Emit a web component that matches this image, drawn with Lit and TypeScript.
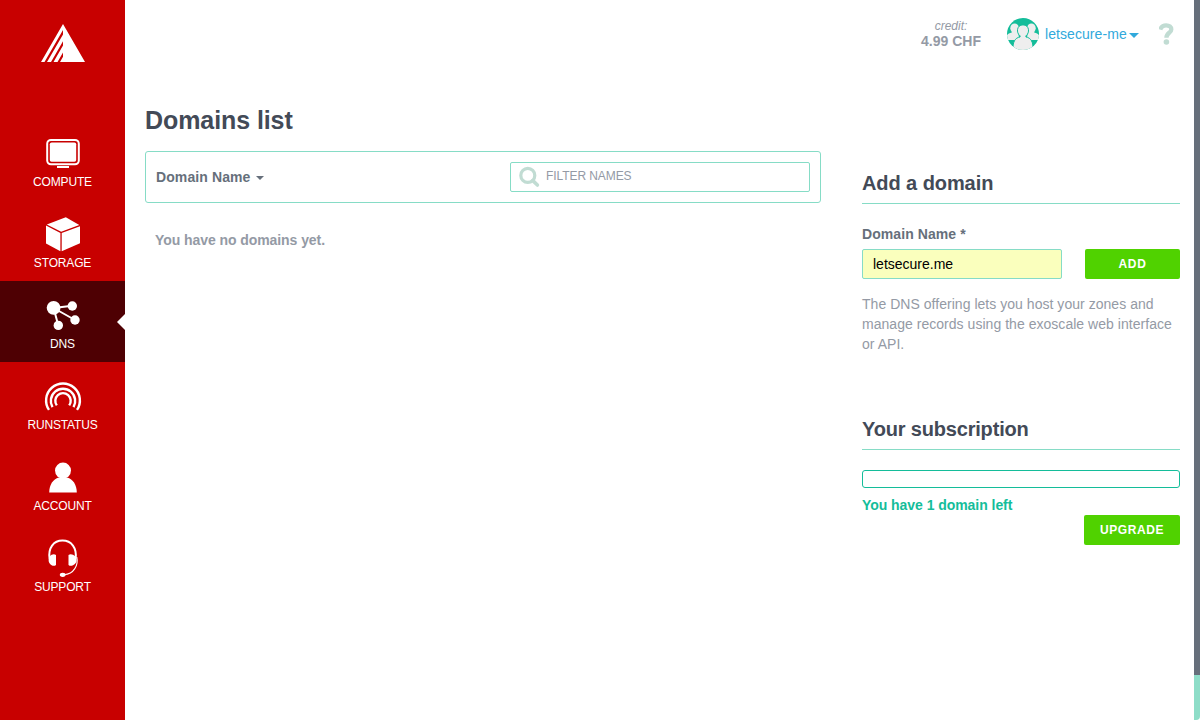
import { LitElement, html, svg, css, type SVGTemplateResult } from "lit";
import { customElement, state } from "lit/decorators.js";
import { classMap } from "lit/directives/class-map.js";

interface NavItem {
  id: string;
  label: string;
  icon: SVGTemplateResult;
}

const NAV: NavItem[] = [
  {
    id: "compute",
    label: "COMPUTE",
    icon: svg`
      <rect x="47.2" y="20.9" width="31.6" height="24.4" rx="3.8" fill="none" stroke="#fff" stroke-width="2"/>
      <rect x="49.8" y="23.4" width="26.4" height="19.3" rx="1.8"/>
      <rect x="57" y="47" width="12" height="2"/>`,
  },
  {
    id: "storage",
    label: "STORAGE",
    icon: svg`
      <path d="M46.8 24.4 L65.8 17.3 L79.3 25.1 L61.2 31.7z"/>
      <path d="M46 25.4 L60.4 33 V51.3 L46 43.4z"/>
      <path d="M61.7 33 L80 26.3 V43.2 L61.7 51.3z"/>`,
  },
  {
    id: "dns",
    label: "DNS",
    icon: svg`
      <path d="M53.6 27 L72.3 24.8 M53.6 27 L75 39 M53.6 27 L58.3 44.4" stroke="#fff" stroke-width="2"/>
      <circle cx="53.6" cy="26.8" r="6.9"/>
      <circle cx="72.3" cy="25" r="4.7"/>
      <circle cx="75" cy="39" r="4.7"/>
      <circle cx="58.3" cy="44.4" r="4.7"/>`,
  },
  {
    id: "runstatus",
    label: "RUNSTATUS",
    icon: svg`
      <g fill="none" stroke="#fff" stroke-width="2.4">
        <path d="M49 47.9 A16.9 16.9 0 1 1 77 47.9"/>
        <path d="M52.5 45.2 A12.2 12.2 0 1 1 73.5 45.2"/>
        <path d="M56.8 43.4 A7.7 7.7 0 1 1 69.2 43.4"/>
      </g>`,
  },
  {
    id: "account",
    label: "ACCOUNT",
    icon: svg`
      <circle cx="63" cy="27.6" r="8"/>
      <path d="M49.2 49.4 C49.4 41.5 53 36.2 58.8 34.5 H67.2 C73 36.2 76.6 41.5 76.8 49.4z"/>`,
  },
  {
    id: "support",
    label: "SUPPORT",
    icon: svg`
      <path d="M49.6 34.5 C48 24 53.5 16.6 62.5 16.6 C71.5 16.6 77 24 75.6 34.5" fill="none" stroke="#fff" stroke-width="2"/>
      <path d="M56 31 V41 Q54 42.6 51.6 41.2 Q48.6 39.5 48.6 36 Q48.6 32.5 51.6 30.8 Q54 29.4 56 31z"/>
      <path d="M68.5 31 V41 Q70.5 42.6 73 41.2 Q76.6 39.5 76.6 36 Q76.6 32.5 73 30.8 Q70.5 29.4 68.5 31z"/>
      <path d="M76.8 33 C78.6 41 74 50 64 50.8" fill="none" stroke="#fff" stroke-width="1.1"/>
      <ellipse cx="62.7" cy="50.8" rx="2.9" ry="2.1"/>`,
  },
];

@customElement("side-nav")
export class SideNav extends LitElement {
  @state() private active = "dns";

  static styles = css`
    :host { display: block; width: 125px; background: #c80000; color: #fff; }
    .logo { display: block; height: 119px; }
    .logo svg { display: block; }
    .item {
      position: relative;
      display: block;
      height: 81px;
      cursor: pointer;
      text-align: center;
      font-size: 12px;
      line-height: 16px;
    }
    .item svg { display: block; fill: #fff; }
    .item.active { background: #4e0003; }
    .label { display: block; margin-top: 1px; letter-spacing: -0.16px; }
    .pointer {
      position: absolute;
      right: 0;
      top: 33px;
      border: 8px solid transparent;
      border-right-color: #fff;
      border-left: 0;
    }
  `;

  render() {
    return html`
      <a class="logo">
        <svg width="125" height="80" fill="#fff">
          <path d="M63 24 L85 62 H60 L63 56.8 V52.5 L57.5 62 H53.5 L63 45.6 V41.3 L51 62 H47 L63 34.4 V30 L44.5 62 H41z"/>
        </svg>
      </a>
      <nav>
        ${NAV.map(
          (item) => html`
            <a
              class=${classMap({ item: true, active: item.id === this.active })}
              @click=${() => (this.active = item.id)}
            >
              <svg width="125" height="54">${item.icon}</svg>
              <span class="label">${item.label}</span>
              ${item.id === this.active ? html`<i class="pointer"></i>` : null}
            </a>
          `
        )}
      </nav>
    `;
  }
}

@customElement("top-bar")
export class TopBar extends LitElement {
  static styles = css`
    :host { display: flex; justify-content: flex-end; height: 68px; padding-right: 20px; }
    .credit { margin: 19px 26px 0 0; text-align: center; color: #949aa5; line-height: 15px; }
    .credit em { display: block; font-size: 12px; }
    .credit b { display: block; font-size: 14px; }
    .avatar { display: block; margin: 18px 6px 0 0; }
    .user { display: flex; width: 94px; margin-top: 24px; font-size: 14px; line-height: 20px; letter-spacing: 0.07px; color: #31a9dc; }
    .caret { margin: 9px 0 0 auto; width: 0; height: 0; border: 5px solid transparent; border-top-color: #31a9dc; border-bottom: 0; }
    .help { display: block; margin: 22px 0 0 20px; }
  `;

  render() {
    return html`
      <div class="credit"><em>credit:</em><b>4.99 CHF</b></div>
      <svg class="avatar" width="32" height="32" viewBox="0 0 32 32">
        <defs><clipPath id="disc"><circle cx="16" cy="16" r="16"/></clipPath></defs>
        <g clip-path="url(#disc)">
          <rect width="32" height="32" fill="#14bd9a"/>
          <g fill="#eee">
            <ellipse cx="7.6" cy="10.2" rx="4.3" ry="4.8"/>
            <path d="M-1 22 C-1 17 1 15.3 4.8 14.6 V12 H10.5 L12.5 22z"/>
            <ellipse cx="24.4" cy="10.2" rx="4.3" ry="4.8"/>
            <path d="M33 22 C33 17 31 15.3 27.2 14.6 V12 H21.5 L19.5 22z"/>
          </g>
          <path d="M5.9 33 C5.6 23.5 8 20 13.1 18.9 L13.1 17.9 C8.9 14.8 9.6 6.9 16 6.9 C22.4 6.9 23.1 14.8 18.9 17.9 L18.9 18.9 C24 20 26.4 23.5 26.1 33z" fill="#eee" stroke="#14bd9a" stroke-width="1"/>
        </g>
      </svg>
      <div class="user"><span>letsecure-me</span><i class="caret"></i></div>
      <svg class="help" width="15" height="24" viewBox="0 0 15 24">
        <path d="M1.3 7.6 C2.2 4.4 4.3 3.4 7.2 3.4 C10.4 3.4 12.3 5 12.3 7.4 C12.3 10.9 7.4 10.8 7.4 15.8" fill="none" stroke="#c1dcd3" stroke-width="4.3"/>
        <circle cx="7.4" cy="20" r="2.8" fill="#c1dcd3"/>
      </svg>
    `;
  }
}

@customElement("domain-list")
export class DomainList extends LitElement {
  static styles = css`
    :host { display: block; width: 676px; }
    h1 { margin: 0 0 16px; font-size: 25px; line-height: 30px; letter-spacing: -0.08px; color: #434a57; }
    .bar {
      box-sizing: border-box;
      display: flex;
      align-items: center;
      justify-content: space-between;
      height: 52px;
      padding: 0 10px;
      border: 1px solid #86dcc6;
      border-radius: 3px;
    }
    .sort { display: flex; align-items: center; font-size: 14px; font-weight: bold; letter-spacing: 0.1px; color: #666f7b; }
    .caret { margin: 2px 0 0 6px; border: 4px solid transparent; border-top-color: #666f7b; border-bottom: 0; }
    .filter {
      box-sizing: border-box;
      display: flex;
      align-items: center;
      width: 300px;
      height: 30px;
      padding-left: 7px;
      border: 1px solid #86dcc6;
      border-radius: 2px;
    }
    .filter svg { flex: none; }
    .filter input {
      flex: 1;
      min-width: 0;
      margin: 0 0 2px 5px;
      padding: 0;
      border: 0;
      outline: 0;
      background: none;
      font: 12px "Liberation Sans", Arial, sans-serif;
      letter-spacing: -0.08px;
      color: #949aa5;
    }
    .filter input::placeholder { color: #949aa5; opacity: 1; }
    .empty { margin: 27px 0 0 10px; font-size: 14px; line-height: 20px; font-weight: bold; letter-spacing: -0.07px; color: #949aa5; }
  `;

  render() {
    return html`
      <h1>Domains list</h1>
      <div class="bar">
        <div class="sort">Domain Name<i class="caret"></i></div>
        <label class="filter">
          <svg width="23" height="22" viewBox="0 0 23 22" fill="none" stroke="#c1dcd3">
            <circle cx="9.8" cy="9.4" r="7" stroke-width="3.2"/>
            <path d="M14.8 14.6 L19.4 19" stroke-width="3.6" stroke-linecap="round"/>
          </svg>
          <input placeholder="FILTER NAMES" />
        </label>
      </div>
      <p class="empty">You have no domains yet.</p>
    `;
  }
}

@customElement("domain-panel")
export class DomainPanel extends LitElement {
  static styles = css`
    :host { display: block; width: 318px; padding-top: 66px; font-size: 14px; line-height: 20px; }
    h2 {
      margin: 0 0 20px;
      padding-bottom: 8px;
      border-bottom: 1px solid #86dcc6;
      font-size: 20px;
      line-height: 24px;
      letter-spacing: -0.08px;
      color: #434a57;
    }
    .plan { letter-spacing: -0.18px; }
    label { display: block; margin-bottom: 5px; font-weight: bold; letter-spacing: 0.08px; color: #666f7b; }
    .form { display: flex; justify-content: space-between; }
    .form input {
      box-sizing: border-box;
      width: 200px;
      height: 30px;
      padding: 0 10px;
      border: 1px solid #86dcc6;
      border-radius: 2px;
      outline: 0;
      background: #faffbd;
      font: 14px "Liberation Sans", Arial, sans-serif;
      color: #000;
    }
    button {
      height: 30px;
      padding: 0;
      border: 0;
      border-radius: 2px;
      background: #50d200;
      color: #fff;
      font: bold 12px "Liberation Sans", Arial, sans-serif;
      letter-spacing: 0.6px;
    }
    .add { width: 95px; }
    .upgrade { display: block; width: 96px; margin-left: auto; }
    .hint { margin: 15px 0 63px; letter-spacing: 0.035px; color: #949aa5; }
    .quota { box-sizing: border-box; height: 18px; border: 1px solid #14bd9a; border-radius: 3px; }
    .left { margin: 7px 0 0; font-weight: bold; letter-spacing: -0.05px; color: #14bd9a; }
  `;

  render() {
    return html`
      <h2>Add a domain</h2>
      <label for="name">Domain Name *</label>
      <div class="form">
        <input id="name" .value=${"letsecure.me"} />
        <button class="add">ADD</button>
      </div>
      <p class="hint">
        The DNS offering lets you host your zones and manage records using the exoscale web interface or API.
      </p>
      <h2 class="plan">Your subscription</h2>
      <div class="quota"></div>
      <p class="left">You have 1 domain left</p>
      <button class="upgrade">UPGRADE</button>
    `;
  }
}

@customElement("app-root")
export class AppRoot extends LitElement {
  static styles = css`
    :host {
      display: grid;
      grid-template-columns: 125px 1fr 6px;
      height: 720px;
      overflow: hidden;
      background: #fff;
      font-family: "Liberation Sans", Arial, sans-serif;
    }
    main { min-width: 0; }
    top-bar { margin-bottom: 37px; }
    .content { display: flex; gap: 41px; padding-left: 20px; }
    .edge { display: flex; flex-direction: column; background: #666f7b; }
    .edge-end { height: 45px; margin-top: auto; background: #fff; }
    .edge-fill { height: 100%; border-bottom-right-radius: 4px; background: #8eddc8; }
  `;

  render() {
    return html`
      <side-nav></side-nav>
      <main>
        <top-bar></top-bar>
        <div class="content">
          <domain-list></domain-list>
          <domain-panel></domain-panel>
        </div>
      </main>
      <div class="edge"><div class="edge-end"><div class="edge-fill"></div></div></div>
    `;
  }
}
